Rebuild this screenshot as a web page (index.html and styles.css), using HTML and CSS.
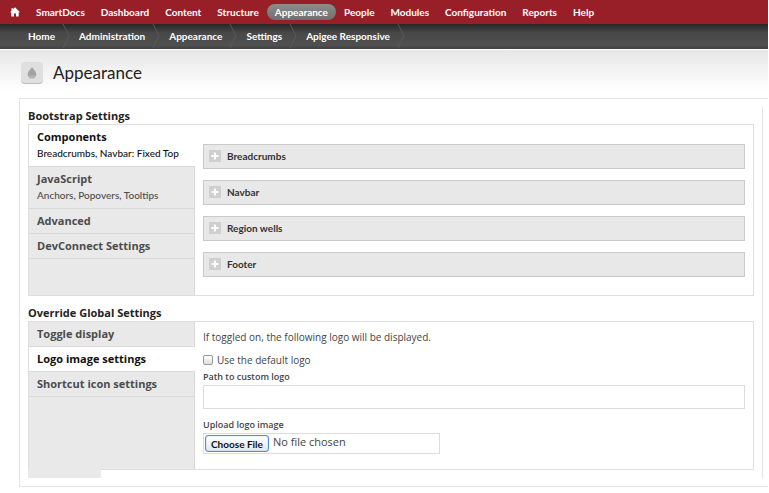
FILE: index.html
```html
<!DOCTYPE html>
<html lang="en">
<head>
<meta charset="utf-8">
<title>Appearance</title>
<link rel="stylesheet" href="styles.css">
</head>
<body>
<nav class="toolbar" aria-label="Administration">
  <a class="home" href="#" aria-label="Home"><svg viewBox="0 0 10 10" width="10" height="10"><path d="M5 .3 10 5.200H8.700v4.300H6V6.500H4v3H1.300V5.200H0L1.500 3.700V1.200H3v1.100z" fill="#fff"/></svg></a>
  <a href="#">SmartDocs</a>
  <a href="#">Dashboard</a>
  <a href="#">Content</a>
  <a href="#">Structure</a>
  <a class="current" href="#">Appearance</a>
  <a href="#">People</a>
  <a href="#">Modules</a>
  <a href="#">Configuration</a>
  <a href="#">Reports</a>
  <a href="#">Help</a>
</nav>
<nav class="trail" aria-label="Breadcrumb">
  <a href="#">Home</a><svg class="chevron" viewBox="0 0 8 24"><path d="M1 0 7 12 1 24"/></svg>
  <a href="#">Administration</a><svg class="chevron" viewBox="0 0 8 24"><path d="M1 0 7 12 1 24"/></svg>
  <a href="#">Appearance</a><svg class="chevron" viewBox="0 0 8 24"><path d="M1 0 7 12 1 24"/></svg>
  <a href="#">Settings</a><svg class="chevron" viewBox="0 0 8 24"><path d="M1 0 7 12 1 24"/></svg>
  <a href="#">Apigee Responsive</a><svg class="chevron" viewBox="0 0 8 24"><path d="M1 0 7 12 1 24"/></svg>
</nav>
<header class="heading">
  <span class="badge"><svg viewBox="0 0 10 13" width="10" height="13"><path d="M5 .5C5.500 3 9.300 5 9.300 8.300A4.300 4.200 0 0 1 .7 8.300C.7 5 4.500 3 5 .5z" fill="#a3a3a3"/><path d="M2 9.500C4 10.500 6.500 10.500 8 9.300 7.500 12 3 12.300 2 9.500z" fill="#c4c4c4"/></svg></span>
  <h1>Appearance</h1>
</header>
<main class="panel">
  <h2>Bootstrap Settings</h2>
  <section class="tabs">
    <ul class="tab-list">
      <li class="active"><a href="#"><strong>Components</strong><small>Breadcrumbs, Navbar: Fixed Top</small></a></li>
      <li><a href="#"><strong>JavaScript</strong><small>Anchors, Popovers, Tooltips</small></a></li>
      <li><a href="#"><strong>Advanced</strong></a></li>
      <li><a href="#"><strong>DevConnect Settings</strong></a></li>
    </ul>
    <div class="pane groups">
      <button class="group" type="button"><svg viewBox="0 0 12 12" width="12" height="12"><path d="M6 2.500v7M2.500 6h7"/></svg>Breadcrumbs</button>
      <button class="group" type="button"><svg viewBox="0 0 12 12" width="12" height="12"><path d="M6 2.500v7M2.500 6h7"/></svg>Navbar</button>
      <button class="group" type="button"><svg viewBox="0 0 12 12" width="12" height="12"><path d="M6 2.500v7M2.500 6h7"/></svg>Region wells</button>
      <button class="group" type="button"><svg viewBox="0 0 12 12" width="12" height="12"><path d="M6 2.500v7M2.500 6h7"/></svg>Footer</button>
    </div>
  </section>
  <h2>Override Global Settings</h2>
  <section class="tabs overhang">
    <ul class="tab-list">
      <li><a href="#"><strong>Toggle display</strong></a></li>
      <li class="active"><a href="#"><strong>Logo image settings</strong></a></li>
      <li><a href="#"><strong>Shortcut icon settings</strong></a></li>
    </ul>
    <form class="pane logo">
      <p>If toggled on, the following logo will be displayed.</p>
      <label class="check"><input type="checkbox">Use the default logo</label>
      <label class="caption" for="path">Path to custom logo</label>
      <input class="path" id="path" type="text">
      <label class="caption" for="upload">Upload logo image</label>
      <div class="file"><button id="upload" type="button">Choose File</button><span>No file chosen</span></div>
    </form>
  </section>
</main>
</body>
</html>
```
FILE: styles.css
```css
* { box-sizing: border-box; }
body {
  margin: 0;
  background: #fff;
  color: #222;
  font-family: "Open Sans", "Noto Sans", sans-serif;
  font-size: 10px;
  line-height: 14px;
}
a { color: inherit; text-decoration: none; }
h1, h2, p, ul { margin: 0; padding: 0; font-weight: normal; }

.toolbar, .trail {
  display: flex;
  align-items: center;
  height: 24px;
  margin-right: 1px;
  color: #fff;
  font-family: Lato, "Open Sans", sans-serif;
  font-weight: 700;
  white-space: nowrap;
}
.toolbar { padding-left: 2px; background: #981f27; }
.toolbar a { padding: 1px 8px; border-radius: 9px; }
.toolbar .home { display: flex; }
.toolbar .current { background: linear-gradient(#8d8d8d, #6f6f6f); }

.trail {
  height: 25px;
  padding: 0 0 1px 28px;
  background: linear-gradient(#262626, #484848 35%, #505050 85%, #3f3f3f);
}
.chevron { width: 8px; height: 24px; margin: 0 9px 0 7px; }
.chevron path { fill: none; stroke: #585858; }

.heading {
  display: flex;
  align-items: center;
  gap: 10px;
  height: 48px;
  margin: 1px 1px 0 0;
  padding: 0 0 2px 21px;
  background: linear-gradient(#e6e6e6, #fff 85%);
}
.badge {
  display: grid;
  place-items: center;
  width: 22px;
  height: 22px;
  border-radius: 4px;
  background: #dfdfdf;
  border-bottom: 1px solid #bdbdbd;
}
h1 { font-family: Lato, "Open Sans", sans-serif; font-size: 17px; line-height: 22px; }

.panel {
  position: relative;
  margin-right: 1px;
  margin-left: 19px;
  padding: 9px 14px 16px 8px;
  border: 1px solid #e4e4e4;
  border-right: 0;
}
.panel::after {
  content: "";
  position: absolute;
  top: 8px;
  right: 5px;
  bottom: 8px;
  border-right: 1px solid #e4e4e4;
}
h2 { font-size: 11px; font-weight: 700; line-height: 16px; }

.tabs {
  position: relative;
  display: grid;
  grid-template-columns: 166px 1fr;
  margin-bottom: 9px;
  border: 1px solid #dedede;
}
.tab-list {
  list-style: none;
  background: #e9e9e9;
  border-right: 1px solid #d8d8d8;
  color: #4c4c4c;
}
.tab-list li { border-bottom: 1px solid #d8d8d8; }
.tab-list a { display: block; padding: 4px 8px; }
.tab-list strong { display: block; font-size: 11px; line-height: 16px; }
.tab-list small { display: block; font: 500 10px/17px Lato, "Open Sans", sans-serif; }
.tab-list .active { margin-right: -1px; background: #fff; color: #111; }

.pane { padding: 19px 8px 18px; }
.groups { display: grid; gap: 11px; align-content: start; }
.group {
  display: flex;
  align-items: center;
  gap: 6px;
  height: 25px;
  padding: 0 5px 1px;
  border: 1px solid #cacaca;
  background: #e8e8e8;
  color: #333;
  font: 700 10px/14px Lato, "Open Sans", sans-serif;
}
.group svg { background: #cfcfcf; }
.group path { stroke: #fff; stroke-width: 2; }

.overhang { margin-bottom: 0; }
.overhang::after {
  content: "";
  position: absolute;
  top: 100%;
  left: -1px;
  width: 73px;
  height: 9px;
  background: #e9e9e9;
}
.logo { padding: 8px 8px 15px; color: #444; }
.logo p { margin-bottom: 9px; font-weight: 500; }
.check { display: flex; align-items: center; gap: 4px; font-weight: 500; }
.check input {
  appearance: none;
  width: 10px;
  height: 10px;
  margin: 0;
  border: 1px solid #999;
  border-radius: 2px;
  background: linear-gradient(#fff, #ddd);
}
.caption { display: block; margin: 3px 0 1px; font-size: 9px; font-weight: 600; }
.path {
  display: block;
  width: 100%;
  height: 24px;
  margin-bottom: 9px;
  border: 1px solid #dcdcdc;
}
.file {
  display: flex;
  gap: 4px;
  width: 237px;
  max-width: 100%;
  height: 21px;
  padding: 1px;
  border: 1px solid #dcdcdc;
}
.file button {
  height: 17px;
  padding: 0 5px;
  border: 1px solid #4f8ed6;
  border-radius: 3px;
  box-shadow: inset 0 0 1px #4f8ed6;
  background: linear-gradient(#fff, #e2e8ef);
  color: #111;
  font: 700 10px/14px Lato, "Open Sans", sans-serif;
}
.file span { font-size: 11px; font-weight: 500; }
```
